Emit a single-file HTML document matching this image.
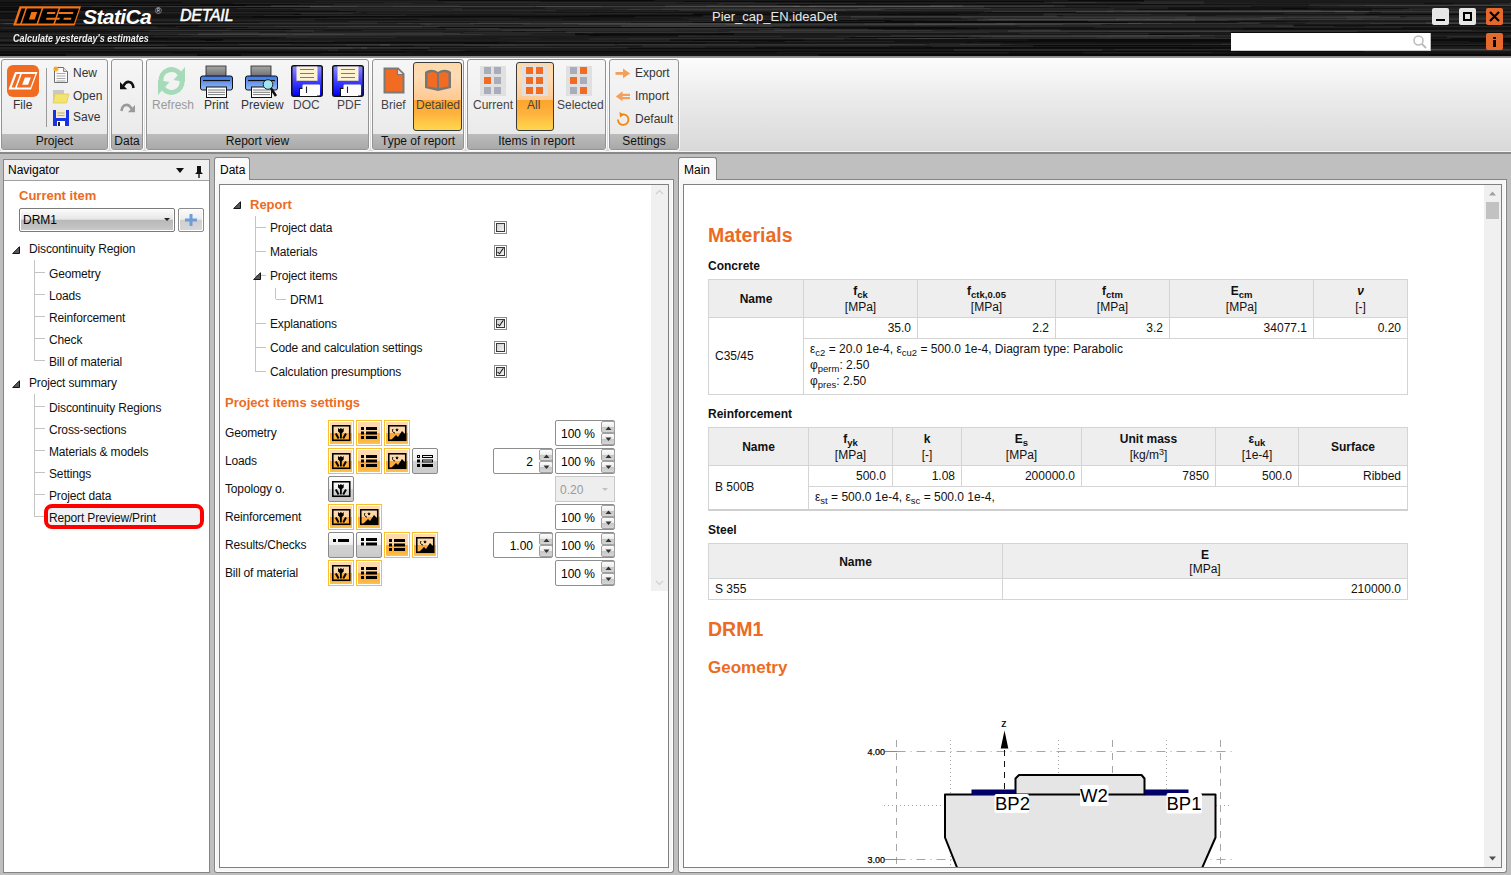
<!DOCTYPE html>
<html><head><meta charset="utf-8">
<style>
*{margin:0;padding:0;box-sizing:border-box}
html,body{width:1511px;height:875px;overflow:hidden;background:#bfbfbf;font-family:"Liberation Sans",sans-serif;font-size:12px;color:#000}
.a{position:absolute}
.t{position:absolute;white-space:nowrap;line-height:1}
#title{left:0;top:0;width:1511px;height:56px;background:#0b0b0b;overflow:hidden}
#ribbon{left:0;top:56px;width:1511px;height:97px;background:linear-gradient(#fdfdfd,#ececec 40%,#d8d8d8);border-top:1px solid #8a8a8a}
.grp{position:absolute;top:2px;height:91px;border:1px solid #939393;border-radius:3px;background:linear-gradient(#f6f6f6,#e9e8e8);box-shadow:0 0 0 1px #fcfcfc}
.grp .lbl{position:absolute;left:0;right:0;bottom:0;height:15px;background:linear-gradient(#bcbcbc,#a9a9a9);text-align:center;font-size:12px;line-height:14px;color:#111}
.btn{position:absolute;text-align:center;font-size:12px;color:#222}
.panel{position:absolute;background:#fff}
.nav-item{position:absolute;font-size:12px;white-space:nowrap;line-height:1}
.obtn{border:1px solid #3a3a3a;border-radius:3px;background:linear-gradient(#fdd9a8 0%,#fedcb4 20%,#fec993 55%,#fda42c 56%,#fdb23e 75%,#ffd84e 100%)}
.tiles{width:26px;height:30px;background:#e0e0e0;padding:1px 4px;display:flex;flex-wrap:wrap;gap:3px 3px;align-content:flex-start}
.tiles i{display:block;width:7px;height:7px;background:#f16b22}
.nv{font-size:12px;color:#111;letter-spacing:-0.15px}
.hb{width:10px;height:1px;background:#c4c4c4}
.tri{position:absolute;width:0;height:0;border-style:solid;border-width:0 0 8px 8px;border-color:transparent transparent #333 transparent}
.cb{position:absolute;width:13px;height:13px;border:1px solid #8a8a8a;background:#fff}
.cb::before{content:"";position:absolute;left:1px;top:1px;width:9px;height:9px;box-sizing:border-box;border:1px solid #3a3a3a;background:linear-gradient(135deg,#cfcfcf,#f2f2f2)}
.cb.on::after{content:"";position:absolute;left:4px;top:1px;width:3px;height:7px;box-sizing:border-box;border:solid #111;border-width:0 1.6px 1.6px 0;transform:rotate(35deg)}
.ib{position:absolute;width:26px;height:26px;border:1px solid #f9c02a;box-shadow:inset 0 0 0 1px #fff;background:linear-gradient(#fedcb0 0%,#fdd7a6 50%,#fda733 52%,#fdb23f 80%,#fec84a 100%)}
.ib.g{border:1px solid #8a8a8a;border-radius:2px;box-shadow:none;background:linear-gradient(#fdfdfd 0%,#eeeeee 50%,#d3d3d3 52%,#cbcbcb 100%)}
.sp{position:absolute;height:26px;border:1px solid #8e8e8e;border-radius:2px;background:#fff}
.spb{position:absolute;width:14px;height:12px;border:1px solid #a0a0a0;border-radius:2px;background:linear-gradient(#fdfdfd 0%,#ececec 45%,#c6c6c6 52%,#d6d6d6 100%)}
.rep{font-family:"Liberation Sans",sans-serif;color:#111}
.h1{font-size:19.5px;font-weight:bold;color:#ec6b23}
.h2{font-size:17px;font-weight:bold;color:#ec6b23}
.h3{font-size:12px;font-weight:bold;color:#111}
.tb{position:absolute;border-collapse:collapse;table-layout:fixed;font-size:12px;line-height:14px}
.tb td{border:1px solid #d4d4d4;padding:0 6px 0 6px;vertical-align:middle;text-align:center}
.tb tr.hd td{background:#eeeeee;line-height:16px;padding-top:1px;padding-bottom:0}
.tb td.r{text-align:right}
.tb td.l{text-align:left}
.tb td.ex{line-height:16px;vertical-align:top;padding-top:2px}
.tb sub{font-size:9.5px;vertical-align:-3px;line-height:0}
.tb sup{font-size:9px;vertical-align:4px;line-height:0}
.or{color:#ec6b23;font-weight:bold}
</style></head><body>

<!-- TITLE BAR -->
<div id="title" class="a">
<svg class="a" style="left:0;top:0;filter:blur(0.6px)" width="1511" height="56"><g fill="#fff"><rect x="223" y="39" width="447" height="2" fill-opacity="0.059"/><rect x="785" y="41" width="109" height="1" fill-opacity="0.061"/><rect x="-194" y="41" width="240" height="1" fill-opacity="0.021"/><rect x="-92" y="34" width="667" height="2" fill-opacity="0.029"/><rect x="535" y="13" width="366" height="1" fill-opacity="0.025"/><rect x="1260" y="10" width="153" height="2" fill-opacity="0.023"/><rect x="-41" y="28" width="215" height="1" fill-opacity="0.015"/><rect x="1284" y="13" width="300" height="1" fill-opacity="0.068"/><rect x="107" y="20" width="632" height="2" fill-opacity="0.063"/><rect x="72" y="13" width="281" height="1" fill-opacity="0.068"/><rect x="-256" y="19" width="449" height="1" fill-opacity="0.038"/><rect x="-167" y="16" width="419" height="2" fill-opacity="0.032"/><rect x="-294" y="37" width="690" height="1" fill-opacity="0.052"/><rect x="334" y="4" width="443" height="1" fill-opacity="0.060"/><rect x="346" y="44" width="269" height="2" fill-opacity="0.041"/><rect x="-184" y="11" width="342" height="1" fill-opacity="0.069"/><rect x="432" y="47" width="493" height="1" fill-opacity="0.016"/><rect x="470" y="23" width="672" height="1" fill-opacity="0.061"/><rect x="977" y="2" width="281" height="1" fill-opacity="0.022"/><rect x="405" y="52" width="604" height="2" fill-opacity="0.035"/><rect x="1288" y="16" width="553" height="2" fill-opacity="0.021"/><rect x="1332" y="49" width="456" height="1" fill-opacity="0.062"/><rect x="-114" y="27" width="293" height="2" fill-opacity="0.034"/><rect x="3" y="23" width="428" height="2" fill-opacity="0.030"/><rect x="-112" y="34" width="399" height="1" fill-opacity="0.053"/><rect x="1335" y="11" width="160" height="2" fill-opacity="0.049"/><rect x="333" y="44" width="575" height="1" fill-opacity="0.024"/><rect x="930" y="5" width="626" height="1" fill-opacity="0.066"/><rect x="1216" y="15" width="688" height="1" fill-opacity="0.034"/><rect x="1033" y="29" width="511" height="2" fill-opacity="0.023"/><rect x="384" y="2" width="292" height="2" fill-opacity="0.022"/><rect x="-29" y="36" width="503" height="1" fill-opacity="0.021"/><rect x="5" y="23" width="140" height="1" fill-opacity="0.061"/><rect x="628" y="9" width="253" height="1" fill-opacity="0.069"/><rect x="1110" y="31" width="405" height="1" fill-opacity="0.041"/><rect x="526" y="30" width="230" height="2" fill-opacity="0.021"/><rect x="984" y="11" width="591" height="1" fill-opacity="0.063"/><rect x="707" y="5" width="358" height="2" fill-opacity="0.043"/><rect x="1309" y="4" width="444" height="2" fill-opacity="0.053"/><rect x="444" y="2" width="652" height="1" fill-opacity="0.054"/><rect x="1114" y="49" width="380" height="1" fill-opacity="0.068"/><rect x="65" y="41" width="674" height="1" fill-opacity="0.062"/><rect x="1284" y="35" width="336" height="1" fill-opacity="0.033"/><rect x="291" y="29" width="592" height="1" fill-opacity="0.051"/><rect x="260" y="22" width="433" height="1" fill-opacity="0.056"/><rect x="1426" y="22" width="256" height="2" fill-opacity="0.063"/><rect x="446" y="28" width="422" height="2" fill-opacity="0.043"/><rect x="106" y="10" width="450" height="1" fill-opacity="0.067"/><rect x="1116" y="18" width="160" height="2" fill-opacity="0.055"/><rect x="51" y="26" width="674" height="1" fill-opacity="0.043"/><rect x="977" y="19" width="646" height="2" fill-opacity="0.058"/><rect x="1175" y="17" width="108" height="2" fill-opacity="0.026"/><rect x="978" y="28" width="265" height="2" fill-opacity="0.027"/><rect x="992" y="11" width="122" height="1" fill-opacity="0.069"/><rect x="-190" y="10" width="216" height="1" fill-opacity="0.021"/><rect x="96" y="30" width="641" height="1" fill-opacity="0.017"/><rect x="478" y="22" width="153" height="1" fill-opacity="0.047"/><rect x="465" y="45" width="80" height="1" fill-opacity="0.034"/><rect x="1110" y="7" width="640" height="1" fill-opacity="0.036"/><rect x="956" y="35" width="388" height="2" fill-opacity="0.020"/><rect x="395" y="32" width="674" height="1" fill-opacity="0.031"/><rect x="1365" y="26" width="657" height="1" fill-opacity="0.050"/><rect x="-9" y="29" width="240" height="2" fill-opacity="0.048"/><rect x="107" y="30" width="216" height="1" fill-opacity="0.048"/><rect x="-299" y="52" width="471" height="2" fill-opacity="0.021"/><rect x="804" y="39" width="224" height="2" fill-opacity="0.033"/><rect x="579" y="24" width="522" height="1" fill-opacity="0.069"/><rect x="682" y="18" width="468" height="1" fill-opacity="0.036"/><rect x="916" y="38" width="346" height="1" fill-opacity="0.056"/><rect x="214" y="31" width="505" height="1" fill-opacity="0.016"/><rect x="286" y="31" width="226" height="1" fill-opacity="0.041"/><rect x="973" y="42" width="534" height="1" fill-opacity="0.029"/><rect x="-21" y="50" width="481" height="2" fill-opacity="0.016"/><rect x="260" y="35" width="329" height="1" fill-opacity="0.066"/><rect x="703" y="15" width="354" height="2" fill-opacity="0.061"/><rect x="300" y="18" width="584" height="1" fill-opacity="0.048"/><rect x="1020" y="33" width="698" height="1" fill-opacity="0.063"/><rect x="315" y="1" width="369" height="1" fill-opacity="0.044"/><rect x="307" y="39" width="622" height="1" fill-opacity="0.016"/><rect x="1096" y="23" width="684" height="1" fill-opacity="0.022"/><rect x="833" y="16" width="546" height="1" fill-opacity="0.053"/><rect x="817" y="43" width="275" height="1" fill-opacity="0.016"/><rect x="878" y="38" width="573" height="1" fill-opacity="0.062"/><rect x="502" y="30" width="281" height="1" fill-opacity="0.064"/><rect x="321" y="53" width="83" height="1" fill-opacity="0.053"/><rect x="286" y="37" width="563" height="1" fill-opacity="0.065"/><rect x="679" y="10" width="642" height="1" fill-opacity="0.064"/><rect x="14" y="34" width="515" height="1" fill-opacity="0.047"/><rect x="1200" y="4" width="315" height="1" fill-opacity="0.030"/><rect x="-172" y="50" width="106" height="1" fill-opacity="0.033"/><rect x="529" y="4" width="578" height="1" fill-opacity="0.018"/><rect x="958" y="14" width="193" height="1" fill-opacity="0.054"/><rect x="1145" y="18" width="528" height="2" fill-opacity="0.023"/><rect x="547" y="11" width="245" height="1" fill-opacity="0.019"/><rect x="1052" y="2" width="468" height="1" fill-opacity="0.056"/><rect x="869" y="3" width="669" height="1" fill-opacity="0.022"/><rect x="-25" y="39" width="90" height="1" fill-opacity="0.039"/><rect x="929" y="43" width="581" height="2" fill-opacity="0.042"/><rect x="-186" y="23" width="221" height="1" fill-opacity="0.053"/><rect x="992" y="36" width="597" height="2" fill-opacity="0.031"/><rect x="971" y="35" width="305" height="2" fill-opacity="0.029"/><rect x="220" y="15" width="370" height="1" fill-opacity="0.043"/><rect x="628" y="23" width="478" height="2" fill-opacity="0.025"/><rect x="-126" y="1" width="666" height="1" fill-opacity="0.052"/><rect x="628" y="38" width="324" height="1" fill-opacity="0.036"/><rect x="362" y="30" width="190" height="1" fill-opacity="0.059"/><rect x="1184" y="34" width="473" height="1" fill-opacity="0.018"/><rect x="1094" y="27" width="308" height="1" fill-opacity="0.056"/><rect x="706" y="42" width="296" height="2" fill-opacity="0.023"/><rect x="425" y="24" width="320" height="2" fill-opacity="0.031"/><rect x="414" y="45" width="475" height="2" fill-opacity="0.036"/><rect x="1347" y="18" width="523" height="1" fill-opacity="0.068"/><rect x="-226" y="33" width="686" height="1" fill-opacity="0.070"/><rect x="69" y="47" width="485" height="1" fill-opacity="0.018"/><rect x="-220" y="12" width="581" height="1" fill-opacity="0.064"/><rect x="1257" y="42" width="436" height="1" fill-opacity="0.015"/><rect x="968" y="19" width="518" height="1" fill-opacity="0.033"/><rect x="92" y="6" width="238" height="1" fill-opacity="0.051"/><rect x="1479" y="23" width="474" height="1" fill-opacity="0.063"/><rect x="830" y="9" width="340" height="1" fill-opacity="0.021"/><rect x="287" y="48" width="320" height="1" fill-opacity="0.017"/><rect x="1240" y="22" width="457" height="1" fill-opacity="0.032"/><rect x="-256" y="44" width="547" height="1" fill-opacity="0.041"/><rect x="1308" y="7" width="412" height="2" fill-opacity="0.031"/><rect x="1193" y="15" width="247" height="2" fill-opacity="0.017"/><rect x="1044" y="1" width="160" height="2" fill-opacity="0.049"/><rect x="1093" y="23" width="399" height="1" fill-opacity="0.025"/><rect x="-164" y="18" width="559" height="1" fill-opacity="0.024"/><rect x="1076" y="11" width="293" height="2" fill-opacity="0.067"/><rect x="581" y="38" width="357" height="1" fill-opacity="0.015"/><rect x="1295" y="28" width="500" height="1" fill-opacity="0.024"/><rect x="1411" y="35" width="611" height="1" fill-opacity="0.046"/><rect x="-155" y="45" width="322" height="1" fill-opacity="0.064"/><rect x="665" y="5" width="135" height="2" fill-opacity="0.053"/><rect x="718" y="3" width="486" height="1" fill-opacity="0.058"/><rect x="1406" y="16" width="497" height="2" fill-opacity="0.040"/><rect x="1492" y="3" width="118" height="1" fill-opacity="0.067"/><rect x="1124" y="11" width="600" height="1" fill-opacity="0.050"/><rect x="178" y="34" width="166" height="1" fill-opacity="0.066"/><rect x="809" y="5" width="245" height="2" fill-opacity="0.048"/><rect x="979" y="13" width="97" height="1" fill-opacity="0.039"/><rect x="566" y="31" width="665" height="2" fill-opacity="0.057"/><rect x="-29" y="40" width="92" height="1" fill-opacity="0.065"/><rect x="619" y="44" width="309" height="1" fill-opacity="0.045"/><rect x="689" y="19" width="169" height="1" fill-opacity="0.058"/><rect x="-35" y="8" width="629" height="1" fill-opacity="0.020"/><rect x="-128" y="44" width="518" height="2" fill-opacity="0.068"/><rect x="264" y="15" width="142" height="1" fill-opacity="0.042"/><rect x="1140" y="3" width="284" height="1" fill-opacity="0.059"/><rect x="-153" y="6" width="510" height="1" fill-opacity="0.057"/><rect x="1275" y="48" width="649" height="1" fill-opacity="0.015"/><rect x="1255" y="41" width="214" height="1" fill-opacity="0.047"/><rect x="1372" y="9" width="99" height="2" fill-opacity="0.055"/><rect x="248" y="27" width="189" height="1" fill-opacity="0.060"/><rect x="-34" y="35" width="408" height="1" fill-opacity="0.019"/><rect x="237" y="8" width="589" height="1" fill-opacity="0.052"/><rect x="1213" y="48" width="650" height="1" fill-opacity="0.017"/><rect x="-34" y="3" width="445" height="1" fill-opacity="0.039"/><rect x="-266" y="39" width="316" height="1" fill-opacity="0.044"/><rect x="112" y="23" width="418" height="1" fill-opacity="0.035"/><rect x="968" y="37" width="247" height="1" fill-opacity="0.055"/><rect x="786" y="17" width="700" height="2" fill-opacity="0.024"/><rect x="613" y="9" width="524" height="1" fill-opacity="0.059"/><rect x="349" y="21" width="536" height="1" fill-opacity="0.065"/><rect x="589" y="38" width="255" height="2" fill-opacity="0.039"/><rect x="790" y="10" width="564" height="2" fill-opacity="0.068"/><rect x="1103" y="52" width="133" height="1" fill-opacity="0.026"/><rect x="182" y="2" width="573" height="1" fill-opacity="0.054"/><rect x="650" y="25" width="300" height="1" fill-opacity="0.026"/><rect x="851" y="19" width="608" height="1" fill-opacity="0.035"/><rect x="420" y="23" width="334" height="2" fill-opacity="0.060"/><rect x="-173" y="53" width="586" height="1" fill-opacity="0.037"/><rect x="1403" y="9" width="324" height="1" fill-opacity="0.042"/><rect x="47" y="6" width="486" height="2" fill-opacity="0.020"/><rect x="108" y="18" width="411" height="1" fill-opacity="0.041"/><rect x="1339" y="5" width="283" height="1" fill-opacity="0.036"/><rect x="748" y="6" width="699" height="1" fill-opacity="0.047"/><rect x="1088" y="20" width="107" height="2" fill-opacity="0.049"/><rect x="726" y="24" width="567" height="2" fill-opacity="0.045"/><rect x="621" y="25" width="673" height="2" fill-opacity="0.066"/><rect x="1072" y="35" width="142" height="1" fill-opacity="0.045"/><rect x="915" y="23" width="100" height="2" fill-opacity="0.052"/><rect x="281" y="13" width="373" height="1" fill-opacity="0.019"/><rect x="428" y="49" width="674" height="2" fill-opacity="0.062"/><rect x="328" y="26" width="94" height="2" fill-opacity="0.030"/><rect x="-153" y="15" width="118" height="2" fill-opacity="0.056"/><rect x="419" y="19" width="700" height="1" fill-opacity="0.049"/><rect x="758" y="30" width="174" height="1" fill-opacity="0.064"/><rect x="1309" y="21" width="637" height="1" fill-opacity="0.038"/><rect x="499" y="42" width="467" height="2" fill-opacity="0.025"/><rect x="124" y="33" width="409" height="1" fill-opacity="0.036"/><rect x="1109" y="35" width="462" height="1" fill-opacity="0.029"/><rect x="301" y="13" width="392" height="2" fill-opacity="0.059"/><rect x="42" y="4" width="158" height="1" fill-opacity="0.050"/><rect x="1043" y="14" width="144" height="2" fill-opacity="0.046"/><rect x="1191" y="34" width="496" height="1" fill-opacity="0.038"/><rect x="782" y="30" width="690" height="1" fill-opacity="0.065"/><rect x="274" y="26" width="166" height="1" fill-opacity="0.048"/><rect x="563" y="11" width="111" height="1" fill-opacity="0.023"/><rect x="836" y="36" width="697" height="1" fill-opacity="0.046"/><rect x="367" y="12" width="688" height="2" fill-opacity="0.021"/><rect x="1192" y="21" width="158" height="1" fill-opacity="0.018"/><rect x="1409" y="8" width="611" height="1" fill-opacity="0.068"/><rect x="1441" y="12" width="559" height="1" fill-opacity="0.050"/><rect x="960" y="44" width="568" height="1" fill-opacity="0.061"/><rect x="1076" y="12" width="240" height="1" fill-opacity="0.021"/><rect x="453" y="9" width="187" height="1" fill-opacity="0.047"/><rect x="361" y="47" width="267" height="2" fill-opacity="0.054"/><rect x="980" y="37" width="185" height="1" fill-opacity="0.035"/><rect x="122" y="12" width="411" height="1" fill-opacity="0.036"/><rect x="1221" y="43" width="165" height="2" fill-opacity="0.029"/><rect x="468" y="29" width="85" height="2" fill-opacity="0.021"/><rect x="-29" y="23" width="83" height="1" fill-opacity="0.042"/><rect x="-153" y="47" width="582" height="2" fill-opacity="0.057"/><rect x="306" y="45" width="96" height="1" fill-opacity="0.021"/><rect x="1237" y="22" width="280" height="1" fill-opacity="0.066"/><rect x="295" y="9" width="590" height="1" fill-opacity="0.050"/><rect x="-75" y="36" width="383" height="1" fill-opacity="0.037"/><rect x="585" y="33" width="131" height="1" fill-opacity="0.027"/><rect x="1064" y="17" width="155" height="1" fill-opacity="0.023"/><rect x="678" y="35" width="522" height="2" fill-opacity="0.069"/><rect x="-112" y="15" width="543" height="1" fill-opacity="0.035"/><rect x="-12" y="0" width="449" height="1" fill-opacity="0.060"/><rect x="851" y="16" width="549" height="2" fill-opacity="0.068"/><rect x="-192" y="5" width="303" height="1" fill-opacity="0.026"/><rect x="271" y="5" width="692" height="2" fill-opacity="0.068"/><rect x="740" y="30" width="103" height="1" fill-opacity="0.018"/><rect x="1294" y="49" width="592" height="2" fill-opacity="0.039"/><rect x="1021" y="42" width="681" height="1" fill-opacity="0.017"/><rect x="1276" y="26" width="503" height="1" fill-opacity="0.060"/><rect x="-270" y="24" width="250" height="1" fill-opacity="0.064"/><rect x="1299" y="19" width="275" height="1" fill-opacity="0.038"/><rect x="143" y="23" width="483" height="1" fill-opacity="0.038"/><rect x="662" y="8" width="452" height="2" fill-opacity="0.031"/><rect x="-48" y="40" width="253" height="1" fill-opacity="0.057"/><rect x="1107" y="4" width="470" height="1" fill-opacity="0.017"/><rect x="102" y="9" width="98" height="1" fill-opacity="0.056"/><rect x="926" y="20" width="549" height="1" fill-opacity="0.022"/><rect x="447" y="4" width="111" height="1" fill-opacity="0.016"/><rect x="246" y="5" width="214" height="1" fill-opacity="0.056"/><rect x="1287" y="21" width="299" height="2" fill-opacity="0.023"/><rect x="841" y="44" width="172" height="1" fill-opacity="0.031"/><rect x="518" y="41" width="463" height="1" fill-opacity="0.032"/><rect x="891" y="35" width="534" height="1" fill-opacity="0.068"/><rect x="-13" y="36" width="349" height="1" fill-opacity="0.016"/><rect x="489" y="46" width="216" height="2" fill-opacity="0.028"/><rect x="-186" y="45" width="88" height="1" fill-opacity="0.016"/><rect x="176" y="26" width="596" height="1" fill-opacity="0.054"/><rect x="328" y="50" width="137" height="1" fill-opacity="0.059"/><rect x="1510" y="2" width="434" height="2" fill-opacity="0.058"/><rect x="600" y="19" width="540" height="1" fill-opacity="0.021"/><rect x="864" y="23" width="622" height="2" fill-opacity="0.030"/><rect x="499" y="38" width="466" height="1" fill-opacity="0.032"/><rect x="1097" y="37" width="159" height="1" fill-opacity="0.050"/><rect x="134" y="47" width="621" height="1" fill-opacity="0.049"/><rect x="312" y="32" width="644" height="1" fill-opacity="0.036"/><rect x="634" y="8" width="439" height="1" fill-opacity="0.018"/><rect x="856" y="36" width="292" height="1" fill-opacity="0.046"/><rect x="1219" y="3" width="170" height="1" fill-opacity="0.021"/><rect x="397" y="23" width="349" height="1" fill-opacity="0.060"/><rect x="-6" y="50" width="207" height="1" fill-opacity="0.029"/><rect x="216" y="40" width="477" height="1" fill-opacity="0.024"/><rect x="239" y="44" width="686" height="1" fill-opacity="0.063"/><rect x="858" y="8" width="133" height="1" fill-opacity="0.065"/><rect x="-48" y="35" width="89" height="2" fill-opacity="0.040"/><rect x="1484" y="43" width="120" height="1" fill-opacity="0.016"/><rect x="545" y="7" width="623" height="2" fill-opacity="0.049"/><rect x="153" y="36" width="629" height="1" fill-opacity="0.067"/><rect x="-169" y="45" width="685" height="1" fill-opacity="0.020"/><rect x="642" y="45" width="391" height="2" fill-opacity="0.051"/><rect x="1418" y="46" width="151" height="2" fill-opacity="0.068"/><rect x="1245" y="25" width="392" height="1" fill-opacity="0.029"/><rect x="-297" y="19" width="410" height="1" fill-opacity="0.043"/><rect x="479" y="29" width="239" height="1" fill-opacity="0.051"/><rect x="952" y="20" width="290" height="1" fill-opacity="0.040"/><rect x="-138" y="22" width="515" height="2" fill-opacity="0.039"/><rect x="508" y="41" width="259" height="1" fill-opacity="0.026"/><rect x="1107" y="10" width="594" height="2" fill-opacity="0.040"/><rect x="-266" y="22" width="228" height="2" fill-opacity="0.039"/><rect x="729" y="31" width="628" height="1" fill-opacity="0.067"/><rect x="191" y="35" width="252" height="1" fill-opacity="0.038"/><rect x="-80" y="39" width="280" height="1" fill-opacity="0.029"/><rect x="241" y="54" width="578" height="2" fill-opacity="0.050"/><rect x="1365" y="5" width="199" height="1" fill-opacity="0.053"/><rect x="-104" y="21" width="185" height="1" fill-opacity="0.063"/><rect x="66" y="54" width="131" height="2" fill-opacity="0.058"/><rect x="52" y="24" width="422" height="1" fill-opacity="0.055"/><rect x="536" y="6" width="417" height="1" fill-opacity="0.064"/><rect x="299" y="4" width="425" height="1" fill-opacity="0.038"/><rect x="-165" y="4" width="388" height="1" fill-opacity="0.019"/><rect x="1319" y="6" width="598" height="1" fill-opacity="0.037"/><rect x="-154" y="26" width="311" height="2" fill-opacity="0.038"/><rect x="293" y="34" width="190" height="1" fill-opacity="0.052"/><rect x="-145" y="23" width="557" height="1" fill-opacity="0.036"/><rect x="203" y="49" width="197" height="1" fill-opacity="0.049"/><rect x="1040" y="5" width="635" height="1" fill-opacity="0.036"/><rect x="327" y="17" width="644" height="1" fill-opacity="0.040"/><rect x="-27" y="32" width="470" height="1" fill-opacity="0.051"/><rect x="367" y="12" width="621" height="1" fill-opacity="0.019"/><rect x="1453" y="3" width="557" height="2" fill-opacity="0.032"/><rect x="223" y="32" width="370" height="2" fill-opacity="0.024"/><rect x="635" y="16" width="561" height="2" fill-opacity="0.037"/><rect x="-99" y="38" width="217" height="1" fill-opacity="0.048"/><rect x="1193" y="44" width="185" height="1" fill-opacity="0.039"/><rect x="211" y="8" width="251" height="2" fill-opacity="0.050"/><rect x="226" y="28" width="555" height="1" fill-opacity="0.062"/><rect x="310" y="6" width="674" height="2" fill-opacity="0.064"/><rect x="1128" y="22" width="133" height="2" fill-opacity="0.045"/><rect x="123" y="7" width="104" height="2" fill-opacity="0.034"/><rect x="1008" y="30" width="580" height="2" fill-opacity="0.063"/><rect x="277" y="38" width="699" height="1" fill-opacity="0.033"/><rect x="772" y="8" width="510" height="1" fill-opacity="0.031"/><rect x="-38" y="49" width="376" height="2" fill-opacity="0.051"/><rect x="339" y="10" width="507" height="1" fill-opacity="0.051"/><rect x="1083" y="52" width="552" height="2" fill-opacity="0.034"/><rect x="734" y="33" width="415" height="2" fill-opacity="0.054"/><rect x="1330" y="50" width="94" height="1" fill-opacity="0.024"/><rect x="-298" y="41" width="631" height="1" fill-opacity="0.058"/><rect x="796" y="14" width="82" height="1" fill-opacity="0.041"/><rect x="114" y="47" width="253" height="2" fill-opacity="0.069"/><rect x="1063" y="15" width="488" height="1" fill-opacity="0.051"/><rect x="1020" y="26" width="314" height="1" fill-opacity="0.051"/><rect x="1044" y="13" width="321" height="2" fill-opacity="0.047"/><rect x="464" y="32" width="525" height="1" fill-opacity="0.047"/><rect x="-108" y="47" width="461" height="2" fill-opacity="0.046"/><rect x="1348" y="48" width="535" height="2" fill-opacity="0.058"/><rect x="233" y="3" width="623" height="1" fill-opacity="0.061"/><rect x="-184" y="27" width="554" height="1" fill-opacity="0.016"/><rect x="52" y="6" width="549" height="1" fill-opacity="0.064"/><rect x="292" y="30" width="614" height="2" fill-opacity="0.019"/><rect x="954" y="49" width="556" height="2" fill-opacity="0.061"/><rect x="1166" y="38" width="289" height="1" fill-opacity="0.016"/><rect x="112" y="32" width="147" height="1" fill-opacity="0.053"/><rect x="793" y="6" width="458" height="1" fill-opacity="0.064"/><rect x="510" y="14" width="83" height="1" fill-opacity="0.017"/><rect x="84" y="19" width="478" height="1" fill-opacity="0.037"/><rect x="1111" y="24" width="272" height="1" fill-opacity="0.027"/><rect x="1" y="28" width="498" height="1" fill-opacity="0.068"/><rect x="774" y="29" width="286" height="2" fill-opacity="0.053"/><rect x="1262" y="17" width="174" height="1" fill-opacity="0.063"/><rect x="1364" y="50" width="506" height="2" fill-opacity="0.060"/><rect x="1507" y="35" width="534" height="1" fill-opacity="0.055"/><rect x="892" y="20" width="336" height="1" fill-opacity="0.054"/><rect x="1381" y="12" width="626" height="1" fill-opacity="0.068"/><rect x="996" y="23" width="176" height="1" fill-opacity="0.054"/><rect x="1370" y="23" width="227" height="1" fill-opacity="0.050"/><rect x="1144" y="0" width="515" height="2" fill-opacity="0.067"/><rect x="655" y="0" width="413" height="1" fill-opacity="0.055"/><rect x="8" y="31" width="456" height="1" fill-opacity="0.015"/><rect x="932" y="46" width="458" height="1" fill-opacity="0.057"/><rect x="1345" y="16" width="665" height="1" fill-opacity="0.040"/><rect x="799" y="38" width="502" height="1" fill-opacity="0.024"/><rect x="601" y="35" width="96" height="1" fill-opacity="0.028"/><rect x="1372" y="6" width="606" height="2" fill-opacity="0.019"/><rect x="149" y="30" width="165" height="2" fill-opacity="0.052"/><rect x="-107" y="20" width="162" height="1" fill-opacity="0.055"/><rect x="356" y="11" width="438" height="1" fill-opacity="0.062"/><rect x="989" y="19" width="206" height="1" fill-opacity="0.066"/><rect x="1012" y="48" width="167" height="2" fill-opacity="0.017"/><rect x="143" y="30" width="533" height="1" fill-opacity="0.032"/><rect x="961" y="17" width="540" height="2" fill-opacity="0.046"/><rect x="198" y="33" width="377" height="2" fill-opacity="0.061"/><rect x="-151" y="19" width="465" height="1" fill-opacity="0.031"/><rect x="408" y="10" width="514" height="1" fill-opacity="0.020"/><rect x="-88" y="43" width="552" height="1" fill-opacity="0.033"/><rect x="-228" y="20" width="543" height="1" fill-opacity="0.054"/><rect x="167" y="38" width="372" height="1" fill-opacity="0.032"/><rect x="777" y="52" width="435" height="1" fill-opacity="0.043"/><rect x="545" y="28" width="281" height="1" fill-opacity="0.049"/><rect x="-47" y="27" width="214" height="1" fill-opacity="0.018"/><rect x="562" y="23" width="697" height="1" fill-opacity="0.067"/><rect x="-281" y="11" width="536" height="1" fill-opacity="0.023"/><rect x="907" y="2" width="128" height="1" fill-opacity="0.019"/><rect x="983" y="18" width="379" height="2" fill-opacity="0.031"/><rect x="-230" y="14" width="523" height="1" fill-opacity="0.040"/><rect x="380" y="44" width="620" height="2" fill-opacity="0.053"/><rect x="1447" y="36" width="484" height="2" fill-opacity="0.061"/><rect x="1435" y="29" width="119" height="1" fill-opacity="0.025"/><rect x="1439" y="20" width="170" height="1" fill-opacity="0.021"/><rect x="1305" y="23" width="428" height="1" fill-opacity="0.067"/><rect x="523" y="24" width="540" height="1" fill-opacity="0.070"/><rect x="1230" y="9" width="635" height="1" fill-opacity="0.040"/><rect x="55" y="11" width="501" height="2" fill-opacity="0.016"/><rect x="346" y="25" width="341" height="1" fill-opacity="0.026"/><rect x="956" y="27" width="608" height="1" fill-opacity="0.040"/><rect x="-228" y="24" width="278" height="2" fill-opacity="0.060"/><rect x="199" y="25" width="591" height="2" fill-opacity="0.063"/><rect x="-247" y="32" width="196" height="1" fill-opacity="0.058"/><rect x="393" y="6" width="424" height="1" fill-opacity="0.049"/></g></svg>
 <svg class="a" style="left:0;top:0" width="90" height="30" viewBox="0 0 90 30"><path d="M19.60 6.30 H81.00 L74.53 25.50 H13.13 Z" fill="#f07318"/><path d="M21.40 8.40 H79.00 L73.94 23.40 H16.34 Z" fill="#000"/><path d="M25.50 8.00 H27.10 L21.71 24.00 H20.11 Z" fill="#f07318"/><path d="M41.80 8.00 H43.40 L38.01 24.00 H36.41 Z" fill="#f07318"/><path d="M58.70 8.00 H60.30 L54.91 24.00 H53.31 Z" fill="#f07318"/><path d="M31.40 12.10 H37.20 L34.71 19.50 H28.91 Z" fill="#f07318"/><path d="M47.40 12.10 H55.50 L54.83 14.10 H46.73 Z" fill="#f07318"/><path d="M46.60 17.70 H60.00 L59.33 19.70 H45.93 Z" fill="#f07318"/><path d="M59.00 12.10 H73.50 L72.83 14.10 H58.33 Z" fill="#f07318"/><path d="M64.00 17.70 H71.50 L70.83 19.70 H63.33 Z" fill="#f07318"/></svg>
 <div class="t" style="left:83px;top:6px;font-size:21px;font-weight:bold;font-style:italic;color:#fff;letter-spacing:-0.6px">StatiCa</div>
 <div class="t" style="left:155px;top:7px;font-size:9px;color:#ddd">&#174;</div>
 <div class="t" style="left:180px;top:8px;font-size:16px;font-style:italic;color:#fff;letter-spacing:-0.3px;-webkit-text-stroke:0.5px #fff">DETAIL</div>
 <div class="t" style="left:13px;top:34px;font-size:10px;font-style:italic;font-weight:bold;color:#f0f0f0;transform:scaleX(0.9);transform-origin:0 0">Calculate yesterday's estimates</div>
 <div class="t" style="left:712px;top:10px;font-size:13px;color:#e8e8e8">Pier_cap_EN.ideaDet</div>
 <div class="a" style="left:1432px;top:8px;width:17px;height:17px;background:#e6e6e6;border-radius:2px"><div class="a" style="left:4px;top:11px;width:9px;height:2px;background:#000"></div></div>
 <div class="a" style="left:1459px;top:8px;width:17px;height:17px;background:#e6e6e6;border-radius:2px"><div class="a" style="left:4px;top:4px;width:9px;height:9px;border:2px solid #000"></div></div>
 <div class="a" style="left:1486px;top:8px;width:17px;height:17px;background:#e3692c;border-radius:2px">
  <svg class="a" style="left:0;top:0" width="17" height="17"><path d="M4 4 L13 13 M13 4 L4 13" stroke="#000" stroke-width="2.2"/></svg></div>
 <div class="a" style="left:1231px;top:33px;width:200px;height:18px;background:#fff;border-right:1px solid #bbb;border-bottom:1px solid #ccc"></div>
 <svg class="a" style="left:1412px;top:34px" width="16" height="16"><circle cx="6.5" cy="6.5" r="4.5" fill="none" stroke="#bbb" stroke-width="1.5"/><path d="M10 10 L14 14" stroke="#bbb" stroke-width="2"/></svg>
 <div class="a" style="left:1486px;top:33px;width:17px;height:17px;background:#e3692c;border-radius:2px">
  <div class="a" style="left:7px;top:4px;width:3px;height:2px;background:#000"></div>
  <div class="a" style="left:7px;top:7px;width:3px;height:7px;background:#000"></div></div>
</div>

<!-- RIBBON -->
<div id="ribbon" class="a">
 <div class="a" style="left:0;top:0;width:1511px;height:1px;background:#9a9a9a"></div>
 <!-- Project -->
 <div class="grp" style="left:1px;width:107px">
  <div class="lbl">Project</div>
 </div>
 <div class="a" style="left:7px;top:8px;width:32px;height:32px;background:#f06c22;border-radius:6px">
  <svg class="a" style="left:0;top:0" width="32" height="32" viewBox="0 0 32 32">
   <path d="M8 7 H30.5 L24 24.5 H1.5 Z" fill="#fff"/>
   <path d="M9.6 9 H13.1 L8.1 22.5 H4.6 Z" fill="#f06c22"/>
   <path d="M14.8 9 H28.4 L23.4 22.5 H9.8 Z M17.9 12.4 L15.2 19.8 H21.1 L23.8 12.4 Z" fill="#f06c22" fill-rule="evenodd"/>
  </svg>
 </div>
 <div class="t" style="left:13px;top:42px;font-size:12px;color:#333">File</div>
 <div class="a" style="left:46px;top:11px;width:1px;height:59px;background:#9a9a9a"></div>
 <svg class="a" style="left:53px;top:9px" width="17" height="18" viewBox="0 0 17 18">
  <path d="M1.5 1.5 h9 l4 4 v11 h-13z" fill="#fbfbfb" stroke="#6e6e6e"/>
  <path d="M10.5 1.5 v4 h4" fill="#e0e0e0" stroke="#6e6e6e" stroke-width="0.8"/>
  <path d="M3.5 7.5h9M3.5 10h9M3.5 12.5h9M3.5 15h9" stroke="#a0a0a0" stroke-width="0.9"/>
  <circle cx="3" cy="3" r="2" fill="#ffd030"/><path d="M0 3h6M3 0v6M0.8 0.8l4.4 4.4M5.2 0.8l-4.4 4.4" stroke="#f79a2a" stroke-width="0.8"/>
 </svg>
 <div class="t" style="left:73px;top:10px;font-size:12px;color:#333">New</div>
 <svg class="a" style="left:52px;top:32px" width="18" height="16" viewBox="0 0 18 16">
  <rect x="1" y="1" width="11" height="11" fill="#c8c8c8"/>
  <path d="M3 5 H17 L14.5 14 H1 Z" fill="#f1e470" stroke="#e9c75a" stroke-width="0.8"/>
 </svg>
 <div class="t" style="left:73px;top:33px;font-size:12px;color:#333">Open</div>
 <svg class="a" style="left:53px;top:53px" width="16" height="16" viewBox="0 0 16 16">
  <rect x="0" y="0" width="16" height="16" fill="#1833e6"/>
  <rect x="3" y="0" width="10" height="8" fill="#f5ecc8"/>
  <path d="M4.5 3h7M4.5 5.5h7" stroke="#b49a5a" stroke-width="0.8"/>
  <rect x="4" y="11" width="8" height="5" fill="#fff"/><rect x="5" y="12" width="2" height="4" fill="#222"/>
 </svg>
 <div class="t" style="left:73px;top:54px;font-size:12px;color:#333">Save</div>

 <!-- Data -->
 <div class="grp" style="left:111px;width:32px">
  <div class="lbl">Data</div>
 </div>
 <svg class="a" style="left:119px;top:20px" width="17" height="14" viewBox="0 0 17 14"><path d="M4.5 9 C7 3.5, 13.5 3, 14.5 11" fill="none" stroke="#111" stroke-width="2.6"/><path d="M1 5 V12.2 H8.2 Z" fill="#111"/></svg>
 <svg class="a" style="left:119px;top:43px" width="17" height="14" viewBox="0 0 17 14"><path d="M12.5 9 C10 3.5, 3.5 3, 2.5 11" fill="none" stroke="#9a9a9a" stroke-width="2.6"/><path d="M16 5 V12.2 H8.8 Z" fill="#9a9a9a"/></svg>

 <!-- Report view -->
 <div class="grp" style="left:146px;width:223px">
  <div class="lbl">Report view</div>
 </div>
 <svg class="a" style="left:157px;top:8px" width="30" height="32" viewBox="0 0 30 32">
  <path d="M4 16 A10.5 10.5 0 0 1 23 9" fill="none" stroke="#a6dbb9" stroke-width="5"/>
  <path d="M28 2 V17 L16.5 15 Z" fill="#a6dbb9"/>
  <path d="M25 16 A10.5 10.5 0 0 1 6 23" fill="none" stroke="#a6dbb9" stroke-width="5"/>
  <path d="M1 30 V15 L12.5 17 Z" fill="#a6dbb9"/>
 </svg>
 <div class="t" style="left:152px;top:42px;font-size:12px;color:#9a9a9a">Refresh</div>
 <svg class="a" style="left:200px;top:8px" width="33" height="33" viewBox="0 0 33 33">
  <rect x="6" y="1" width="20" height="11" fill="url(#gGray)" stroke="#222" stroke-width="0.8"/>
  <rect x="0.5" y="11" width="32" height="14" rx="2" fill="url(#gBlue)" stroke="#111"/>
  <path d="M3 15.5 H30" stroke="#111" stroke-width="1.2"/>
  <rect x="6.5" y="22" width="20" height="10.5" fill="#fff" stroke="#111"/>
  <path d="M8 25 h17 M8 27.3h17 M8 29.6h17" stroke="#444" stroke-width="0.7"/>
 </svg>
 <div class="t" style="left:204px;top:42px;font-size:12px;color:#333">Print</div>
 <svg class="a" style="left:245px;top:8px" width="35" height="35" viewBox="0 0 35 35">
  <rect x="6" y="1" width="20" height="11" fill="url(#gGray)" stroke="#222" stroke-width="0.8"/>
  <rect x="0.5" y="11" width="32" height="14" rx="2" fill="url(#gBlue)" stroke="#111"/>
  <path d="M3 15.5 H30" stroke="#111" stroke-width="1.2"/>
  <rect x="6.5" y="22" width="20" height="10.5" fill="#fff" stroke="#111"/>
  <path d="M8 25 h17 M8 27.3h17 M8 29.6h17" stroke="#444" stroke-width="0.7"/>
  <path d="M25 22 L31 31" stroke="#111" stroke-width="2.5"/>
  <circle cx="23" cy="19.5" r="4.8" fill="#9ee6f0" stroke="#222" stroke-width="1"/>
 </svg>
 <div class="t" style="left:241px;top:42px;font-size:12px;color:#333">Preview</div>
 <svg class="a" style="left:291px;top:8px" width="32" height="32" viewBox="0 0 32 32">
  <rect x="0.75" y="0.75" width="30.5" height="30.5" rx="2" fill="url(#gFl)" stroke="#111" stroke-width="1.5"/>
  <rect x="5.5" y="1.5" width="21" height="15" fill="#fdf3d2"/>
  <path d="M5.5 16.3 H26.5" stroke="#3a3a5a" stroke-width="1"/>
  <path d="M9 4.5h14M9 8.5h14M9 12.5h14" stroke="#786c52" stroke-width="0.9"/>
  <rect x="8" y="23" width="10" height="8.5" fill="#111"/>
  <rect x="9" y="24" width="17" height="7" fill="#fff"/>
  <rect x="11.5" y="19.5" width="17.5" height="11" rx="1" fill="#fff"/>
  <path d="M15.5 21.5v6.5" stroke="#222" stroke-width="1.1"/>
 </svg>
 <div class="t" style="left:293px;top:42px;font-size:12px;color:#444">DOC</div>
 <svg class="a" style="left:332px;top:8px" width="32" height="32" viewBox="0 0 32 32">
  <rect x="0.75" y="0.75" width="30.5" height="30.5" rx="2" fill="url(#gFl)" stroke="#111" stroke-width="1.5"/>
  <rect x="5.5" y="1.5" width="21" height="15" fill="#fdf3d2"/>
  <path d="M5.5 16.3 H26.5" stroke="#3a3a5a" stroke-width="1"/>
  <path d="M9 4.5h14M9 8.5h14M9 12.5h14" stroke="#786c52" stroke-width="0.9"/>
  <rect x="8" y="23" width="10" height="8.5" fill="#111"/>
  <rect x="9" y="24" width="17" height="7" fill="#fff"/>
  <rect x="11.5" y="19.5" width="17.5" height="11" rx="1" fill="#fff"/>
  <path d="M15.5 21.5v6.5" stroke="#222" stroke-width="1.1"/>
 </svg>
 <div class="t" style="left:337px;top:42px;font-size:12px;color:#444">PDF</div>

 <!-- Type of report -->
 <div class="grp" style="left:372px;width:92px">
  <div class="lbl">Type of report</div>
 </div>
 <svg class="a" style="left:383px;top:10px" width="22" height="27" viewBox="0 0 22 27">
  <path d="M1.5 1.5 H15 L20.5 7 V25.5 H1.5 Z" fill="#f16b22" stroke="#7a7a7a" stroke-width="2"/>
  <path d="M14.5 2 V7.5 H20" fill="#e8e8e8" stroke="#7a7a7a" stroke-width="1.2"/>
 </svg>
 <div class="t" style="left:381px;top:42px;font-size:12px;color:#444">Brief</div>
 <div class="a obtn" style="left:413px;top:5px;width:49px;height:69px"></div>
 <svg class="a" style="left:424px;top:12px" width="28" height="23" viewBox="0 0 28 23">
  <path d="M1 3 C5 0, 10 0, 14 3 C18 0, 23 0, 27 3 V19 L14 22 L1 19 Z" fill="#777"/>
  <path d="M3.5 4.5 C6.5 2.5, 10 2.5, 13 4.5 V19 L3.5 17.5 Z" fill="#f16b22"/>
  <path d="M15 4.5 C18 2.5, 21.5 2.5, 24.5 4.5 V17.5 L15 19 Z" fill="#f16b22"/>
 </svg>
 <div class="t" style="left:416px;top:42px;font-size:12px;color:#444">Detailed</div>

 <!-- Items in report -->
 <div class="grp" style="left:467px;width:139px">
  <div class="lbl">Items in report</div>
 </div>
 <div class="a tiles" style="left:480px;top:9px"><i style="background:#a9adbb"></i><i style="background:#a9adbb"></i><i style="background:#f16b22"></i><i style="background:#a9adbb"></i><i style="background:#a9adbb"></i><i style="background:#a9adbb"></i></div>
 <div class="t" style="left:473px;top:42px;font-size:12px;color:#444">Current</div>
 <div class="a obtn" style="left:516px;top:5px;width:38px;height:69px"></div>
 <div class="a tiles" style="left:522px;top:9px"><i></i><i></i><i></i><i></i><i></i><i></i></div>
 <div class="t" style="left:527px;top:42px;font-size:12px;color:#444">All</div>
 <div class="a tiles" style="left:566px;top:9px"><i style="background:#a9adbb"></i><i></i><i></i><i style="background:#a9adbb"></i><i style="background:#a9adbb"></i><i></i></div>
 <div class="t" style="left:557px;top:42px;font-size:12px;color:#444">Selected</div>

 <!-- Settings -->
 <div class="grp" style="left:609px;width:70px">
  <div class="lbl">Settings</div>
 </div>
 <svg class="a" style="left:615px;top:11px" width="16" height="11" viewBox="0 0 16 11"><rect x="0.5" y="4" width="8.5" height="2.8" fill="#f5a05a"/><path d="M8 0.4 L15.2 5.4 L8 10.2 Z" fill="#f5a05a"/></svg>
 <div class="t" style="left:635px;top:10px;font-size:12px;color:#333">Export</div>
 <svg class="a" style="left:615px;top:34px" width="16" height="11" viewBox="0 0 16 11"><rect x="6" y="2.8" width="9" height="2.2" fill="#f5a05a"/><rect x="6" y="6" width="9" height="2.2" fill="#f5a05a"/><path d="M7.5 0.3 L0.8 5.5 L7.5 10.3 Z" fill="#f5a05a"/></svg>
 <div class="t" style="left:635px;top:33px;font-size:12px;color:#333">Import</div>
 <svg class="a" style="left:615px;top:54px" width="16" height="16" viewBox="0 0 16 16"><path d="M6.5 3.6 A5.3 5.3 0 1 1 2.9 8.5" fill="none" stroke="#f3860f" stroke-width="1.8"/><path d="M4.5 1 L9 3.8 L5 6.5 Z" fill="#f3860f"/></svg>
 <div class="t" style="left:635px;top:56px;font-size:12px;color:#333">Default</div>
</div>
<svg width="0" height="0" style="position:absolute"><defs>
 <linearGradient id="gGray" x1="0" y1="0" x2="0" y2="1"><stop offset="0" stop-color="#a8a8a8"/><stop offset="1" stop-color="#6a6a6a"/></linearGradient>
 <linearGradient id="gBlue" x1="0" y1="0" x2="0" y2="1"><stop offset="0" stop-color="#3a78e8"/><stop offset="1" stop-color="#9bbcf5"/></linearGradient>
 <linearGradient id="gFl" x1="0" y1="0" x2="0" y2="1"><stop offset="0" stop-color="#9090ff"/><stop offset="0.55" stop-color="#3a3aff"/><stop offset="1" stop-color="#0000f0"/></linearGradient>
</defs></svg>

<!-- NAVIGATOR -->
<div class="a" style="left:0;top:152px;width:1511px;height:2px;background:#888"></div>
<div class="a" style="left:0;top:151px;width:1511px;height:1px;background:#f4f4f4"></div>
<div class="a" id="nav" style="left:3px;top:159px;width:207px;height:714px;background:#fff;border:1px solid #858585">
 <div class="a" style="left:0;top:0;width:205px;height:21px;background:#f0f0f0;border-bottom:1px solid #a0a0a0"></div>
 <div class="t" style="left:4px;top:4px;font-size:12px;color:#000">Navigator</div>
 <svg class="a" style="left:172px;top:8px" width="9" height="6"><path d="M0 0 H8 L4 5z" fill="#111"/></svg>
 <svg class="a" style="left:190px;top:5px" width="10" height="13" viewBox="0 0 10 13"><path d="M3 1 h4 v6 l2 2 h-8 l2 -2z" fill="#111"/><path d="M5 9 v4" stroke="#111" stroke-width="1.4"/></svg>
</div>
<div class="t or" style="left:19px;top:189px;font-size:13px">Current item</div>
<div class="a" style="left:19px;top:208px;width:156px;height:24px;border:1px solid #7a7a7a;border-radius:2px;box-shadow:inset 0 0 0 1px #fff;background:linear-gradient(#fcfcfc 0%,#e6e6e6 47%,#b8b8b8 50%,#c9c9c9 100%)"></div>
<div class="t" style="left:23px;top:214px;font-size:12px">DRM1</div>
<svg class="a" style="left:164px;top:218px" width="6" height="4"><path d="M0 0 H6 L3 3z" fill="#222"/></svg>
<div class="a" style="left:178px;top:208px;width:26px;height:24px;border:1px solid #8a8a8a;border-radius:2px;box-shadow:inset 0 0 0 1px #fff;background:linear-gradient(#fcfcfc 0%,#ececec 47%,#cfcfcf 50%,#d8d8d8 100%)"></div>
<svg class="a" style="left:184px;top:213px" width="14" height="14" viewBox="0 0 14 14"><path d="M7 1 V13 M1 7 H13" stroke="#6e9ed8" stroke-width="3"/></svg>

<svg class="a" style="left:12px;top:246px" width="8" height="8"><path d="M7.5 0.7 V7.5 H0.7 Z" fill="#575757" stroke="#151515" stroke-width="1" stroke-linejoin="miter"/></svg>
<div class="t nv" style="left:29px;top:243px">Discontinuity Region</div>
<div class="a" style="left:34px;top:260px;width:1px;height:101px;background:#c4c4c4"></div>
<div class="a hb" style="left:35px;top:272px"></div><div class="t nv" style="left:49px;top:268px">Geometry</div>
<div class="a hb" style="left:35px;top:294px"></div><div class="t nv" style="left:49px;top:290px">Loads</div>
<div class="a hb" style="left:35px;top:316px"></div><div class="t nv" style="left:49px;top:312px">Reinforcement</div>
<div class="a hb" style="left:35px;top:338px"></div><div class="t nv" style="left:49px;top:334px">Check</div>
<div class="a hb" style="left:35px;top:360px"></div><div class="t nv" style="left:49px;top:356px">Bill of material</div>

<svg class="a" style="left:12px;top:380px" width="8" height="8"><path d="M7.5 0.7 V7.5 H0.7 Z" fill="#575757" stroke="#151515" stroke-width="1" stroke-linejoin="miter"/></svg>
<div class="t nv" style="left:29px;top:377px">Project summary</div>
<div class="a" style="left:34px;top:394px;width:1px;height:123px;background:#c4c4c4"></div>
<div class="a hb" style="left:35px;top:406px"></div><div class="t nv" style="left:49px;top:402px">Discontinuity Regions</div>
<div class="a hb" style="left:35px;top:428px"></div><div class="t nv" style="left:49px;top:424px">Cross-sections</div>
<div class="a hb" style="left:35px;top:450px"></div><div class="t nv" style="left:49px;top:446px">Materials &amp; models</div>
<div class="a hb" style="left:35px;top:472px"></div><div class="t nv" style="left:49px;top:468px">Settings</div>
<div class="a hb" style="left:35px;top:494px"></div><div class="t nv" style="left:49px;top:490px">Project data</div>
<div class="a hb" style="left:35px;top:516px"></div>
<div class="a" style="left:44px;top:504px;width:160px;height:25px;border:4px solid #ff0000;border-radius:8px;background:#f1f1f3"></div>
<div class="t nv" style="left:49px;top:512px">Report Preview/Print</div>

<!-- DATA PANEL -->
<div class="a" style="left:214px;top:157px;width:36px;height:24px;background:#fafafa;border:1px solid #858585;border-bottom:none;border-radius:3px 3px 0 0"></div>
<div class="t" style="left:220px;top:164px;font-size:12px">Data</div>
<div class="a" style="left:249px;top:179px;width:425px;height:1px;background:#858585"></div>
<div class="a" style="left:214px;top:180px;width:460px;height:693px;background:#f6f6f6;border:1px solid #858585;border-top:none;border-radius:0 0 3px 3px;box-shadow:inset 1px 0 0 #fff,inset -1px -1px 0 #fff"></div>
<div class="a" style="left:219px;top:184px;width:450px;height:684px;background:#fff;border:1px solid #808080"></div>
<div class="a" style="left:651px;top:185px;width:17px;height:406px;background:#f0f0f0"></div>
<svg class="a" style="left:655px;top:189px" width="9" height="6"><path d="M1 5 L4.5 1.5 L8 5" fill="none" stroke="#d0d0d0" stroke-width="1.2"/></svg>
<svg class="a" style="left:655px;top:580px" width="9" height="6"><path d="M1 1 L4.5 4.5 L8 1" fill="none" stroke="#d0d0d0" stroke-width="1.2"/></svg>

<svg class="a" style="left:233px;top:201px" width="8" height="8"><path d="M7.5 0.7 V7.5 H0.7 Z" fill="#575757" stroke="#151515" stroke-width="1" stroke-linejoin="miter"/></svg>
<div class="t or" style="left:250px;top:198px;font-size:13px">Report</div>
<div class="a" style="left:255px;top:216px;width:1px;height:156px;background:#c4c4c4"></div>
<div class="a hb" style="left:256px;top:227px"></div><div class="t nv" style="left:270px;top:222px">Project data</div>
<div class="a hb" style="left:256px;top:251px"></div><div class="t nv" style="left:270px;top:246px">Materials</div>
<div class="a hb" style="left:256px;top:275px"></div><div class="t nv" style="left:270px;top:270px">Project items</div>
<svg class="a" style="left:253px;top:272px" width="8" height="8"><path d="M7.5 0.7 V7.5 H0.7 Z" fill="#575757" stroke="#151515" stroke-width="1" stroke-linejoin="miter"/></svg>
<div class="a" style="left:275px;top:288px;width:1px;height:11px;background:#c4c4c4"></div>
<div class="a" style="left:276px;top:299px;width:10px;height:1px;background:#c4c4c4"></div>
<div class="t nv" style="left:290px;top:294px">DRM1</div>
<div class="a hb" style="left:256px;top:323px"></div><div class="t nv" style="left:270px;top:318px">Explanations</div>
<div class="a hb" style="left:256px;top:347px"></div><div class="t nv" style="left:270px;top:342px">Code and calculation settings</div>
<div class="a hb" style="left:256px;top:371px"></div><div class="t nv" style="left:270px;top:366px">Calculation presumptions</div>
<div class="cb" style="left:494px;top:221px"></div>
<div class="cb on" style="left:494px;top:245px"></div>
<div class="cb on" style="left:494px;top:317px"></div>
<div class="cb" style="left:494px;top:341px"></div>
<div class="cb on" style="left:494px;top:365px"></div>

<div class="t or" style="left:225px;top:396px;font-size:13px">Project items settings</div>
<div class="t nv" style="left:225px;top:427px">Geometry</div>
<div class="t nv" style="left:225px;top:455px">Loads</div>
<div class="t nv" style="left:225px;top:483px">Topology o.</div>
<div class="t nv" style="left:225px;top:511px">Reinforcement</div>
<div class="t nv" style="left:225px;top:539px">Results/Checks</div>
<div class="t nv" style="left:225px;top:567px">Bill of material</div>
<div class="ib" style="left:328px;top:420px"><div class="a" style="left:3px;top:4px"><svg width="20" height="18" viewBox="0 0 20 18"><rect x="0.75" y="0.75" width="17" height="14.5" fill="none" stroke="#000" stroke-width="1.6"/><path d="M6 3 L7.5 4.3 L8.9 3 L10.3 4.3 L11.7 3 V6.5 L9.8 8.3 H8 L6 6.5 Z M8 8 h1.8 v5.5 h-1.8z" fill="#000"/><path d="M3.8 8.5 L6.6 13.5 M14 8.5 L11.2 13.5" stroke="#000" stroke-width="2"/></svg></div></div><div class="ib" style="left:356px;top:420px"><div class="a" style="left:4px;top:6px"><svg width="18" height="14" viewBox="0 0 18 14"><rect x="0" y="0" width="3" height="3"/><rect x="5" y="0" width="11" height="3"/><rect x="0" y="4.5" width="3" height="3"/><rect x="5" y="4.5" width="11" height="3"/><rect x="0" y="9" width="3" height="3"/><rect x="5" y="9" width="11" height="3"/></svg></div></div><div class="ib" style="left:384px;top:420px"><div class="a" style="left:3px;top:4px"><svg width="20" height="18" viewBox="0 0 20 18"><rect x="0.75" y="0.75" width="17" height="14.5" fill="none" stroke="#000" stroke-width="1.6"/><path d="M3 15 L8 10 L10 12 L14 6 L17 9 V15z" fill="#000"/><path d="M5 4 a2.5 2.5 0 0 0 2 4" fill="none" stroke="#000" stroke-width="1"/><path d="M9 3 l0.6 1.2 l1.2 0.2 l-0.9 0.8 l0.2 1.2 l-1.1 -0.6 l-1.1 0.6 l0.2 -1.2 l-0.9 -0.8 l1.2 -0.2z" fill="#000"/></svg></div></div>
<div class="sp" style="left:555px;top:420px;width:60px"><div class="t" style="right:19px;top:7px;font-size:12px">100 %</div><div class="spb" style="left:45px;top:0"><svg width="13" height="12"><path d="M3.5 8 L6.5 4.5 L9.5 8z" fill="#333"/></svg></div><div class="spb" style="left:45px;top:12px"><svg width="13" height="12"><path d="M3.5 3.5 L6.5 7 L9.5 3.5z" fill="#333"/></svg></div></div>
<div class="ib" style="left:328px;top:448px"><div class="a" style="left:3px;top:4px"><svg width="20" height="18" viewBox="0 0 20 18"><rect x="0.75" y="0.75" width="17" height="14.5" fill="none" stroke="#000" stroke-width="1.6"/><path d="M6 3 L7.5 4.3 L8.9 3 L10.3 4.3 L11.7 3 V6.5 L9.8 8.3 H8 L6 6.5 Z M8 8 h1.8 v5.5 h-1.8z" fill="#000"/><path d="M3.8 8.5 L6.6 13.5 M14 8.5 L11.2 13.5" stroke="#000" stroke-width="2"/></svg></div></div><div class="ib" style="left:356px;top:448px"><div class="a" style="left:4px;top:6px"><svg width="18" height="14" viewBox="0 0 18 14"><rect x="0" y="0" width="3" height="3"/><rect x="5" y="0" width="11" height="3"/><rect x="0" y="4.5" width="3" height="3"/><rect x="5" y="4.5" width="11" height="3"/><rect x="0" y="9" width="3" height="3"/><rect x="5" y="9" width="11" height="3"/></svg></div></div><div class="ib" style="left:384px;top:448px"><div class="a" style="left:3px;top:4px"><svg width="20" height="18" viewBox="0 0 20 18"><rect x="0.75" y="0.75" width="17" height="14.5" fill="none" stroke="#000" stroke-width="1.6"/><path d="M3 15 L8 10 L10 12 L14 6 L17 9 V15z" fill="#000"/><path d="M5 4 a2.5 2.5 0 0 0 2 4" fill="none" stroke="#000" stroke-width="1"/><path d="M9 3 l0.6 1.2 l1.2 0.2 l-0.9 0.8 l0.2 1.2 l-1.1 -0.6 l-1.1 0.6 l0.2 -1.2 l-0.9 -0.8 l1.2 -0.2z" fill="#000"/></svg></div></div><div class="ib g" style="left:412px;top:448px"><div class="a" style="left:4px;top:6px"><svg width="18" height="14" viewBox="0 0 18 14"><rect x="0.5" y="0.5" width="2" height="2" fill="none" stroke="#000"/><rect x="5.5" y="0.5" width="10" height="2" fill="none" stroke="#000"/><rect x="0.5" y="5" width="2" height="2" fill="none" stroke="#000"/><rect x="5.5" y="5" width="10" height="2" fill="none" stroke="#000"/><rect x="0" y="9" width="3" height="3"/><rect x="5" y="9" width="11" height="3"/></svg></div></div>
<div class="sp" style="left:493px;top:448px;width:60px"><div class="t" style="right:19px;top:7px;font-size:12px">2</div><div class="spb" style="left:45px;top:0"><svg width="13" height="12"><path d="M3.5 8 L6.5 4.5 L9.5 8z" fill="#333"/></svg></div><div class="spb" style="left:45px;top:12px"><svg width="13" height="12"><path d="M3.5 3.5 L6.5 7 L9.5 3.5z" fill="#333"/></svg></div></div>
<div class="sp" style="left:555px;top:448px;width:60px"><div class="t" style="right:19px;top:7px;font-size:12px">100 %</div><div class="spb" style="left:45px;top:0"><svg width="13" height="12"><path d="M3.5 8 L6.5 4.5 L9.5 8z" fill="#333"/></svg></div><div class="spb" style="left:45px;top:12px"><svg width="13" height="12"><path d="M3.5 3.5 L6.5 7 L9.5 3.5z" fill="#333"/></svg></div></div>
<div class="ib g" style="left:328px;top:476px"><div class="a" style="left:3px;top:4px"><svg width="20" height="18" viewBox="0 0 20 18"><rect x="0.75" y="0.75" width="17" height="14.5" fill="none" stroke="#000" stroke-width="1.6"/><path d="M6 3 L7.5 4.3 L8.9 3 L10.3 4.3 L11.7 3 V6.5 L9.8 8.3 H8 L6 6.5 Z M8 8 h1.8 v5.5 h-1.8z" fill="#000"/><path d="M3.8 8.5 L6.6 13.5 M14 8.5 L11.2 13.5" stroke="#000" stroke-width="2"/></svg></div></div>
<div class="a" style="left:555px;top:476px;width:60px;height:26px;border:1px solid #c8c8c8;background:#eeeeee"><div class="t" style="left:4px;top:7px;color:#9a9a9a;font-size:12px">0.20</div><svg class="a" style="left:46px;top:11px" width="7" height="4"><path d="M0 0 H6 L3 3z" fill="#c0c0c0"/></svg></div>
<div class="ib" style="left:328px;top:504px"><div class="a" style="left:3px;top:4px"><svg width="20" height="18" viewBox="0 0 20 18"><rect x="0.75" y="0.75" width="17" height="14.5" fill="none" stroke="#000" stroke-width="1.6"/><path d="M6 3 L7.5 4.3 L8.9 3 L10.3 4.3 L11.7 3 V6.5 L9.8 8.3 H8 L6 6.5 Z M8 8 h1.8 v5.5 h-1.8z" fill="#000"/><path d="M3.8 8.5 L6.6 13.5 M14 8.5 L11.2 13.5" stroke="#000" stroke-width="2"/></svg></div></div><div class="ib" style="left:356px;top:504px"><div class="a" style="left:3px;top:4px"><svg width="20" height="18" viewBox="0 0 20 18"><rect x="0.75" y="0.75" width="17" height="14.5" fill="none" stroke="#000" stroke-width="1.6"/><path d="M3 15 L8 10 L10 12 L14 6 L17 9 V15z" fill="#000"/><path d="M5 4 a2.5 2.5 0 0 0 2 4" fill="none" stroke="#000" stroke-width="1"/><path d="M9 3 l0.6 1.2 l1.2 0.2 l-0.9 0.8 l0.2 1.2 l-1.1 -0.6 l-1.1 0.6 l0.2 -1.2 l-0.9 -0.8 l1.2 -0.2z" fill="#000"/></svg></div></div>
<div class="sp" style="left:555px;top:504px;width:60px"><div class="t" style="right:19px;top:7px;font-size:12px">100 %</div><div class="spb" style="left:45px;top:0"><svg width="13" height="12"><path d="M3.5 8 L6.5 4.5 L9.5 8z" fill="#333"/></svg></div><div class="spb" style="left:45px;top:12px"><svg width="13" height="12"><path d="M3.5 3.5 L6.5 7 L9.5 3.5z" fill="#333"/></svg></div></div>
<div class="ib g" style="left:328px;top:532px"><div class="a" style="left:4px;top:5px"><svg width="18" height="14" viewBox="0 0 18 14"><rect x="0" y="1" width="3" height="3"/><rect x="5" y="1" width="11" height="3"/></svg></div></div><div class="ib g" style="left:356px;top:532px"><div class="a" style="left:4px;top:5px"><svg width="18" height="14" viewBox="0 0 18 14"><rect x="0" y="0" width="3" height="3"/><rect x="5" y="0" width="11" height="3"/><rect x="0" y="4.5" width="3" height="3"/><rect x="5" y="4.5" width="11" height="3"/></svg></div></div><div class="ib" style="left:384px;top:532px"><div class="a" style="left:4px;top:6px"><svg width="18" height="14" viewBox="0 0 18 14"><rect x="0" y="0" width="3" height="3"/><rect x="5" y="0" width="11" height="3"/><rect x="0" y="4.5" width="3" height="3"/><rect x="5" y="4.5" width="11" height="3"/><rect x="0" y="9" width="3" height="3"/><rect x="5" y="9" width="11" height="3"/></svg></div></div><div class="ib" style="left:412px;top:532px"><div class="a" style="left:3px;top:4px"><svg width="20" height="18" viewBox="0 0 20 18"><rect x="0.75" y="0.75" width="17" height="14.5" fill="none" stroke="#000" stroke-width="1.6"/><path d="M3 15 L8 10 L10 12 L14 6 L17 9 V15z" fill="#000"/><path d="M5 4 a2.5 2.5 0 0 0 2 4" fill="none" stroke="#000" stroke-width="1"/><path d="M9 3 l0.6 1.2 l1.2 0.2 l-0.9 0.8 l0.2 1.2 l-1.1 -0.6 l-1.1 0.6 l0.2 -1.2 l-0.9 -0.8 l1.2 -0.2z" fill="#000"/></svg></div></div>
<div class="sp" style="left:493px;top:532px;width:60px"><div class="t" style="right:19px;top:7px;font-size:12px">1.00</div><div class="spb" style="left:45px;top:0"><svg width="13" height="12"><path d="M3.5 8 L6.5 4.5 L9.5 8z" fill="#333"/></svg></div><div class="spb" style="left:45px;top:12px"><svg width="13" height="12"><path d="M3.5 3.5 L6.5 7 L9.5 3.5z" fill="#333"/></svg></div></div>
<div class="sp" style="left:555px;top:532px;width:60px"><div class="t" style="right:19px;top:7px;font-size:12px">100 %</div><div class="spb" style="left:45px;top:0"><svg width="13" height="12"><path d="M3.5 8 L6.5 4.5 L9.5 8z" fill="#333"/></svg></div><div class="spb" style="left:45px;top:12px"><svg width="13" height="12"><path d="M3.5 3.5 L6.5 7 L9.5 3.5z" fill="#333"/></svg></div></div>
<div class="ib" style="left:328px;top:560px"><div class="a" style="left:3px;top:4px"><svg width="20" height="18" viewBox="0 0 20 18"><rect x="0.75" y="0.75" width="17" height="14.5" fill="none" stroke="#000" stroke-width="1.6"/><path d="M6 3 L7.5 4.3 L8.9 3 L10.3 4.3 L11.7 3 V6.5 L9.8 8.3 H8 L6 6.5 Z M8 8 h1.8 v5.5 h-1.8z" fill="#000"/><path d="M3.8 8.5 L6.6 13.5 M14 8.5 L11.2 13.5" stroke="#000" stroke-width="2"/></svg></div></div><div class="ib" style="left:356px;top:560px"><div class="a" style="left:4px;top:6px"><svg width="18" height="14" viewBox="0 0 18 14"><rect x="0" y="0" width="3" height="3"/><rect x="5" y="0" width="11" height="3"/><rect x="0" y="4.5" width="3" height="3"/><rect x="5" y="4.5" width="11" height="3"/><rect x="0" y="9" width="3" height="3"/><rect x="5" y="9" width="11" height="3"/></svg></div></div>
<div class="sp" style="left:555px;top:560px;width:60px"><div class="t" style="right:19px;top:7px;font-size:12px">100 %</div><div class="spb" style="left:45px;top:0"><svg width="13" height="12"><path d="M3.5 8 L6.5 4.5 L9.5 8z" fill="#333"/></svg></div><div class="spb" style="left:45px;top:12px"><svg width="13" height="12"><path d="M3.5 3.5 L6.5 7 L9.5 3.5z" fill="#333"/></svg></div></div>

<!-- MAIN PANEL -->
<div class="a" style="left:678px;top:157px;width:39px;height:24px;background:#fafafa;border:1px solid #858585;border-bottom:none;border-radius:3px 3px 0 0"></div>
<div class="t" style="left:684px;top:164px;font-size:12px">Main</div>
<div class="a" style="left:716px;top:179px;width:791px;height:1px;background:#858585"></div>
<div class="a" style="left:678px;top:180px;width:829px;height:693px;background:#f6f6f6;border:1px solid #858585;border-top:none;border-radius:0 0 3px 3px;box-shadow:inset 1px 0 0 #fff,inset -1px -1px 0 #fff"></div>
<div class="a" style="left:683px;top:184px;width:819px;height:684px;background:#fff;border:1px solid #808080;overflow:hidden">
 <div class="a" style="left:800px;top:0;width:17px;height:682px;background:#f0f0f0"></div>
 <svg class="a" style="left:805px;top:6px" width="8" height="5"><path d="M0 4.5 L3.5 0.5 L7 4.5z" fill="#a0a0a0"/></svg>
 <div class="a" style="left:802px;top:17px;width:13px;height:17px;background:#c2c2c2"></div>
 <svg class="a" style="left:805px;top:671px" width="8" height="5"><path d="M0 0.5 L3.5 4.5 L7 0.5z" fill="#505050"/></svg>
</div>
<div class="a rep" style="left:683px;top:184px;width:801px;height:683px;overflow:hidden">
 <div class="t h1" style="left:25px;top:42px">Materials</div>
 <div class="t h3" style="left:25px;top:76px">Concrete</div>
 <table class="tb" style="left:25px;top:95px;width:699px">
  <colgroup><col style="width:95px"><col style="width:114px"><col style="width:138px"><col style="width:114px"><col style="width:144px"><col style="width:94px"></colgroup>
  <tr class="hd" style="height:38px"><td rowspan="1"><b>Name</b></td><td><b>f<sub>ck</sub></b><br>[MPa]</td><td><b>f<sub>ctk,0.05</sub></b><br>[MPa]</td><td><b>f<sub>ctm</sub></b><br>[MPa]</td><td><b>E<sub>cm</sub></b><br>[MPa]</td><td><b><i>&#957;</i></b><br>[-]</td></tr>
  <tr style="height:21px"><td rowspan="2" class="l">C35/45</td><td class="r">35.0</td><td class="r">2.2</td><td class="r">3.2</td><td class="r">34077.1</td><td class="r">0.20</td></tr>
  <tr style="height:56px"><td colspan="5" class="l ex">&#949;<sub>c2</sub> = 20.0 1e-4, &#949;<sub>cu2</sub> = 500.0 1e-4, Diagram type: Parabolic<br>&#966;<sub>perm</sub>: 2.50<br>&#966;<sub>pres</sub>: 2.50</td></tr>
 </table>
 <div class="t h3" style="left:25px;top:224px">Reinforcement</div>
 <table class="tb" style="left:25px;top:243px;width:699px;border-bottom:2px solid #cfcfcf">
  <colgroup><col style="width:100px"><col style="width:84px"><col style="width:69px"><col style="width:120px"><col style="width:134px"><col style="width:83px"><col style="width:109px"></colgroup>
  <tr class="hd" style="height:38px"><td><b>Name</b></td><td><b>f<sub>yk</sub></b><br>[MPa]</td><td><b>k</b><br>[-]</td><td><b>E<sub>s</sub></b><br>[MPa]</td><td><b>Unit mass</b><br>[kg/m<sup>3</sup>]</td><td><b>&#949;<sub>uk</sub></b><br>[1e-4]</td><td><b>Surface</b></td></tr>
  <tr style="height:21px"><td rowspan="2" class="l" style="border-bottom:2px solid #cfcfcf">B 500B</td><td class="r">500.0</td><td class="r">1.08</td><td class="r">200000.0</td><td class="r">7850</td><td class="r">500.0</td><td class="r">Ribbed</td></tr>
  <tr style="height:23px"><td colspan="6" class="l ex" style="border-bottom:2px solid #cfcfcf">&#949;<sub>st</sub> = 500.0 1e-4, &#949;<sub>sc</sub> = 500.0 1e-4,</td></tr>
 </table>
 <div class="t h3" style="left:25px;top:340px">Steel</div>
 <table class="tb" style="left:25px;top:359px;width:699px">
  <colgroup><col style="width:294px"><col style="width:405px"></colgroup>
  <tr class="hd" style="height:35px"><td><b>Name</b></td><td style="line-height:14px;padding-top:2px"><b>E</b><br>[MPa]</td></tr>
  <tr style="height:21px"><td class="l">S 355</td><td class="r">210000.0</td></tr>
 </table>
 <div class="t h1" style="left:25px;top:436px">DRM1</div>
 <div class="t h2" style="left:25px;top:475px">Geometry</div>
 <svg class="a" style="left:167px;top:516px" width="400" height="175" viewBox="850 700 400 175">
 <g stroke="#a6a6a6" stroke-width="1" fill="none">
  <path d="M896.5 751.5 H1232" stroke-dasharray="9 5 1 5"/>
  <path d="M896.5 859.5 H1232" stroke-dasharray="9 5 1 5"/>
  <path d="M884 805.5 H1232" stroke-dasharray="1 3"/>
  <path d="M896.5 740 V880" stroke-dasharray="7 6"/>
  <path d="M1112.5 740 V880" stroke-dasharray="7 6"/>
  <path d="M1220.5 740 V880" stroke-dasharray="7 6"/>
  <path d="M950.5 740 V880" stroke-dasharray="1 3"/>
  <path d="M1058.5 740 V880" stroke-dasharray="1 3"/>
  <path d="M1166.5 740 V880" stroke-dasharray="1 3"/>
 </g>
 <path d="M885 751.5 H897 M885 859.5 H897" stroke="#8a8a8a" stroke-width="1"/>
 <text x="867.5" y="755" font-size="9" font-family="Liberation Sans" fill="#000" stroke="#000" stroke-width="0.25">4.00</text>
 <text x="867.5" y="863" font-size="9" font-family="Liberation Sans" fill="#000" stroke="#000" stroke-width="0.25">3.00</text>
 <path d="M1004.5 750 V794" stroke="#111" stroke-width="1" stroke-dasharray="6 5"/>
 <path d="M1004.5 730.5 L1008.3 748.5 H1000.7 Z" fill="#000"/>
 <text x="1001.3" y="727" font-size="10.5" font-family="Liberation Sans" fill="#000" stroke="#000" stroke-width="0.2">z</text>
 <path d="M945 794.5 V837.5 L960 875 H1199 L1215.5 837.5 V794.5 H1144.5 V778.5 L1141.5 775 H1019 L1015.5 778.5 V794.5 Z" fill="#e5e5e5" stroke="#000" stroke-width="2" stroke-linejoin="round"/>
 <path d="M1015.5 794.5 H1144.5" stroke="#000" stroke-width="2"/>
 <rect x="971.5" y="789.5" width="44" height="5.5" fill="#000066"/>
 <rect x="1144.5" y="789.5" width="44" height="5.5" fill="#000066"/>
 <rect x="994.5" y="794" width="34.5" height="19" rx="2" fill="#fff"/>
 <rect x="1080" y="785" width="28.5" height="21" rx="2" fill="#fff"/>
 <rect x="1166.5" y="793" width="35.5" height="20.5" rx="2" fill="#fff"/>
 <text x="995" y="810" font-size="18.5" font-family="Liberation Sans" fill="#000">BP2</text>
 <text x="1080" y="802" font-size="18.5" font-family="Liberation Sans" fill="#000">W2</text>
 <text x="1166.5" y="810" font-size="18.5" font-family="Liberation Sans" fill="#000">BP1</text>
</svg>
</div>

</body></html>
